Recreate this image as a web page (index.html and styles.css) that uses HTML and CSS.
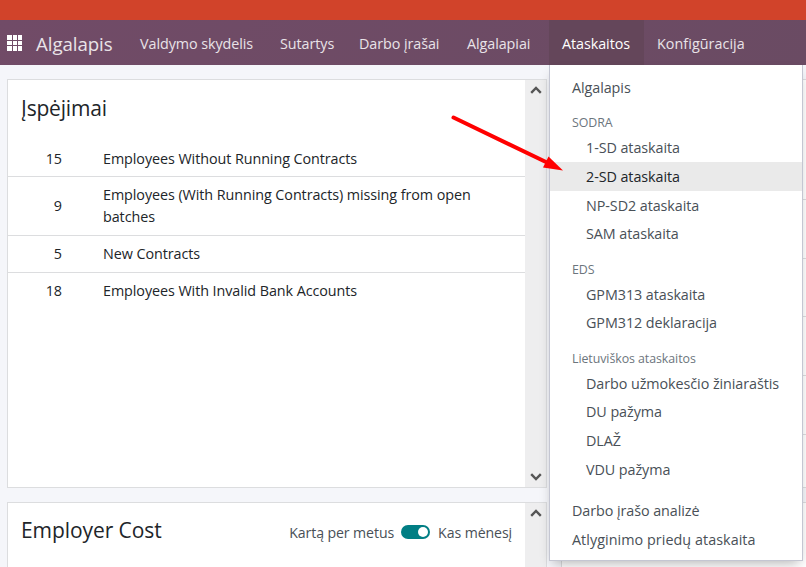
FILE: index.html
```html
<!DOCTYPE html>
<html lang="lt">
<head>
<meta charset="utf-8">
<title>Algalapis</title>
<link rel="stylesheet" href="styles.css">
</head>
<body>
<div class="strip"></div>
<header class="navbar">
  <svg class="apps" width="15" height="16" viewBox="0 0 15 16" fill="#fff" shape-rendering="crispEdges"><path d="M0 0h5v5H0zM6 0h4v5H6zM11 0h4v5h-4zM0 6h5v4H0zM6 6h4v4H6zM11 6h4v4h-4zM0 11h5v5H0zM6 11h4v5H6zM11 11h4v5h-4z"/></svg>
  <span class="brand">Algalapis</span>
  <nav class="links">
    <a class="link l1">Valdymo skydelis</a>
    <a class="link l2">Sutartys</a>
    <a class="link l3">Darbo įrašai</a>
    <a class="link l4">Algalapiai</a>
    <div class="link open l5">Ataskaitos
      <div class="menu">
        <a class="item">Algalapis</a>
        <div class="group">SODRA</div>
        <a class="item sub">1-SD ataskaita</a>
        <a class="item sub active">2-SD ataskaita</a>
        <a class="item sub">NP-SD2 ataskaita</a>
        <a class="item sub">SAM ataskaita</a>
        <div class="group">EDS</div>
        <a class="item sub">GPM313 ataskaita</a>
        <a class="item sub">GPM312 deklaracija</a>
        <div class="group">Lietuviškos ataskaitos</div>
        <a class="item sub">Darbo užmokesčio žiniaraštis</a>
        <a class="item sub">DU pažyma</a>
        <a class="item sub">DLAŽ</a>
        <a class="item sub">VDU pažyma</a>
        <a class="item spaced">Darbo įrašo analizė</a>
        <a class="item last">Atlyginimo priedų ataskaita</a>
      </div>
    </div>
    <a class="link l6">Konfigūracija</a>
  </nav>
</header>
<main class="board">
  <section class="card">
    <div class="content">
      <h2 class="title t1">Įspėjimai</h2>
      <div class="row"><span class="count">15</span><span class="text">Employees Without Running Contracts</span></div>
      <div class="row"><span class="count">9</span><span class="text">Employees (With Running Contracts) missing from open batches</span></div>
      <div class="row"><span class="count">5</span><span class="text">New Contracts</span></div>
      <div class="row"><span class="count">18</span><span class="text">Employees With Invalid Bank Accounts</span></div>
    </div>
    <div class="scroll">
      <svg width="12" height="8" viewBox="0 0 12 8"><path d="M1.2 6.8 6 2l4.8 4.8" fill="none" stroke="#555" stroke-width="2.4"/></svg>
      <svg width="12" height="8" viewBox="0 0 12 8"><path d="M1.2 1.2 6 6l4.8-4.8" fill="none" stroke="#555" stroke-width="2.4"/></svg>
    </div>
  </section>
  <section class="card side">
    <div class="line first"></div><div class="line"></div><div class="line"></div><div class="line"></div><div class="line"></div>
  </section>
  <section class="card">
    <div class="content cost">
      <h2 class="title t2">Employer Cost</h2>
      <div class="period"><span>Kartą per metus</span><span class="toggle"></span><span>Kas mėnesį</span></div>
    </div>
    <div class="scroll">
      <svg width="12" height="8" viewBox="0 0 12 8"><path d="M1.2 6.8 6 2l4.8 4.8" fill="none" stroke="#555" stroke-width="2.4"/></svg>
    </div>
  </section>
  <section class="card side"></section>
</main>
<svg class="arrow" width="116" height="60" viewBox="450 114 116 60"><path d="M453.5 117.5 547 162.500" stroke="#f00" stroke-width="4" stroke-linecap="round"/><path d="M548.500 156.500 563 170.500 543 167.500z" fill="#f00"/></svg>
</body>
</html>
```
FILE: styles.css
```css
* { box-sizing: border-box; }
body {
  margin: 0;
  height: 567px;
  overflow: hidden;
  background: #f5f6fa;
  color: #212529;
  font: 14.35px/22px "Open Sans", "Noto Sans", sans-serif;
  letter-spacing: -0.07px;
  position: relative;
}
.strip { height: 20px; background: #d1432a; }
.navbar {
  display: flex;
  align-items: center;
  height: 45px;
  padding-left: 7px;
  background: linear-gradient(135deg, #714b67, #6a4b63);
  color: #e9e3e8;
}
.apps { margin-bottom: 0; }
.brand { margin: 2px 0 0 14px; width: 91px; font-size: 18.7px; white-space: nowrap; }
.links { display: flex; height: 45px; line-height: 47px; }
.link { padding-left: 13px; white-space: nowrap; }
.l1 { width: 140px; }
.l2 { width: 79px; }
.l3 { width: 108px; }
.l4 { width: 95px; }
.l5 { width: 95px; }
.l6 { letter-spacing: 0.05px; }
.open { position: relative; background: #64465a; color: #fff; }
.menu {
  position: absolute;
  z-index: 2;
  top: 45px;
  left: 0;
  width: 254px;
  height: 496px;
  padding-top: 7.7px;
  background: #fff;
  border: 1px solid #c4c6d2;
  border-top: 0;
  box-shadow: 0 6px 12px -4px rgba(0, 0, 0, .3);
  color: #495057;
}
.item { display: block; height: 28.68px; padding-left: 22px; line-height: 29px; }
.sub { padding-left: 36px; }
.last { letter-spacing: 0.05px; }
.active { background: #eaeaea; color: #212529; }
.group { height: 31.8px; padding: 12px 0 0 22px; line-height: 20px; font-size: 12.4px; color: #6c757d; }
.group + .item { margin-top: 0; }
.spaced { margin-top: 12.5px; }
.board {
  display: grid;
  grid-template-columns: 540px 260px;
  grid-template-rows: 409px 80px;
  gap: 14px;
  padding: 14px 0 0 7px;
}
.card { display: flex; background: #fff; border: 1px solid #dcdddf; overflow: hidden; }
.content { flex: 1; }
.title { margin: 0; padding: 11px 13px 0; font-size: 21px; line-height: 34px; font-weight: 400; }
.t1 { height: 60.3px; letter-spacing: -0.2px; }
.row { display: flex; align-items: center; padding: 7.4px 0 6.4px; border-bottom: 1px solid #dcdddf; }
.row:last-child { border: 0; }
.count { width: 54px; text-align: right; }
.text { width: 390px; margin-left: 41px; }
.scroll {
  display: flex;
  flex-direction: column;
  justify-content: space-between;
  align-items: center;
  width: 21px;
  padding: 6px 0;
  background: #eeeeef;
}
.cost { display: flex; justify-content: space-between; }
.t2 { padding-top: 10px; }
.period { display: flex; align-items: center; height: 60px; padding-right: 13px; color: #495057; white-space: nowrap; font-size: 14.15px; letter-spacing: -0.1px; }
.toggle {
  display: flex;
  justify-content: flex-end;
  width: 29px;
  height: 14px;
  margin: -2px 8px 0 7px;
  padding: 2px;
  border-radius: 7px;
  background: #017e84;
}
.toggle::after { content: ""; width: 10px; height: 10px; border-radius: 5px; background: #fff; }
.side { display: block; }
.line { height: 58.7px; border-bottom: 1px solid #dcdddf; }
.first { height: 120px; }
.arrow { position: absolute; z-index: 3; left: 450px; top: 114px; }
```
